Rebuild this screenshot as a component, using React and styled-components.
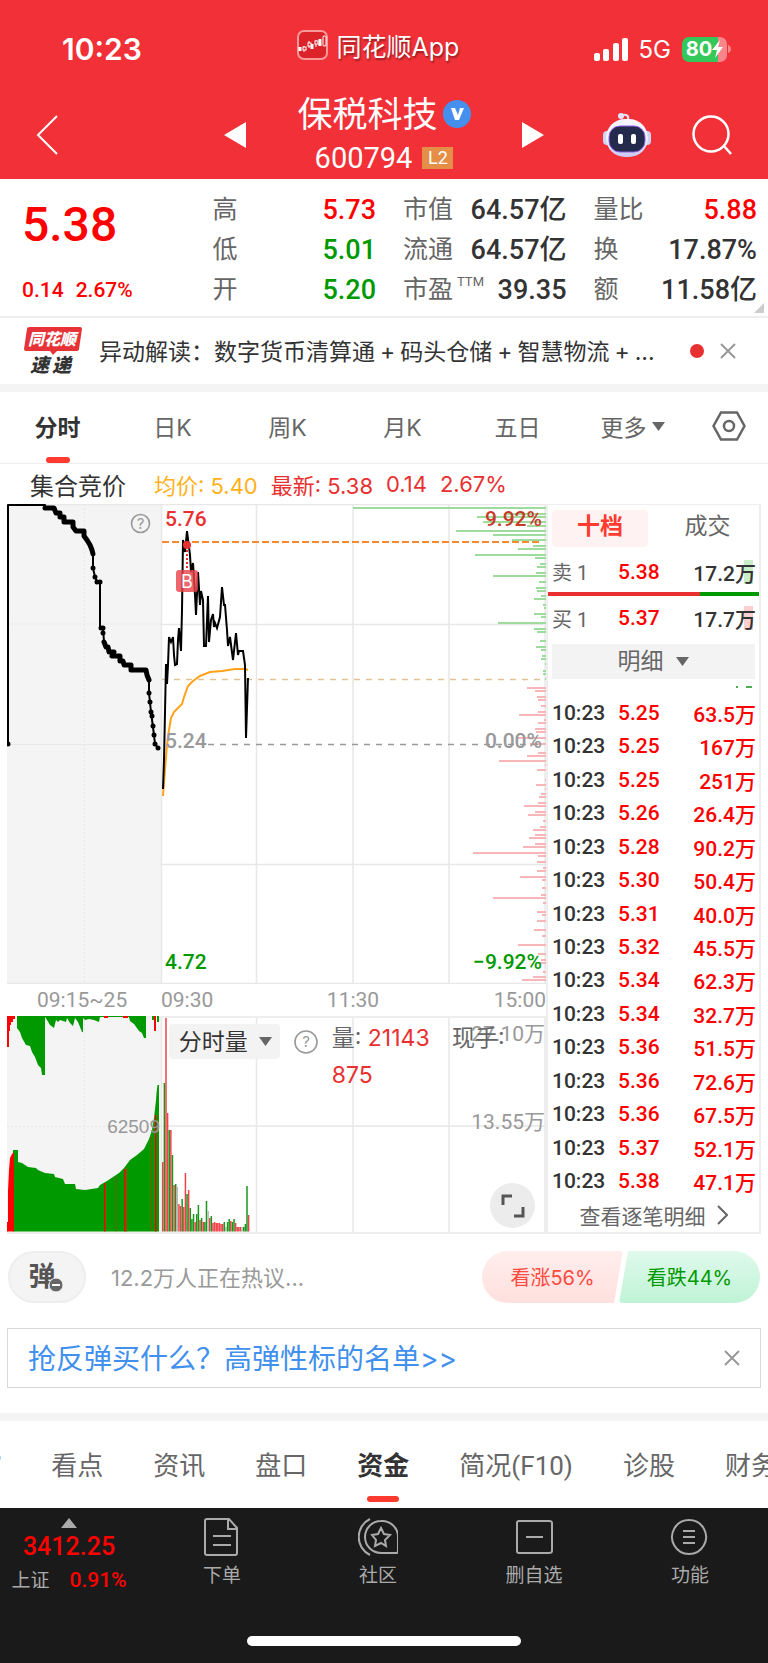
import React from "react";
import styled, { createGlobalStyle, css } from "styled-components";

const numberFont = `Roboto, "Noto Sans CJK SC", sans-serif`;
const textFont = `Inter, "Noto Sans CJK SC", sans-serif`;

const GlobalStyle = createGlobalStyle`
  * {
    box-sizing: border-box;
  }

  body {
    margin: 0;
    background: #fff;
    color: #333;
    font-family: ${textFont};
  }

  button, select {
    margin: 0;
    padding: 0;
    border: 0;
    background: none;
    color: inherit;
    font: inherit;
    cursor: pointer;
  }

  a {
    color: inherit;
    text-decoration: none;
  }

  svg {
    display: block;
    flex-shrink: 0;
  }
`;

const RED = "#f00";
const SOFT_RED = "#e93030";
const GREEN = "#090";

/* ---------- header ---------- */

const Header = styled.header`
  background: #f23038;
  color: #fff;
  height: 179px;
  display: flex;
  flex-direction: column;
`;

const StatusBar = styled.div`
  display: grid;
  grid-template-columns: 1fr auto 1fr;
  align-items: center;
  height: 90px;
  padding: 0 37px 0 25px;
`;

const Clock = styled.time`
  font-size: 30px;
  font-weight: 600;
  padding: 8px 0 0 37px;
`;

const AppMark = styled.div`
  display: flex;
  align-items: center;
  gap: 9px;
  font-size: 25px;
  text-shadow: 1px 2px 2px rgba(0, 0, 0, 0.4);
`;

const Signals = styled.div`
  display: flex;
  justify-content: flex-end;
  align-items: center;
  gap: 11px;
  font-size: 24px;
  padding-top: 8px;
`;

const BatteryBox = styled.div`
  display: flex;
  align-items: center;
  gap: 1px;
`;

const Battery = styled.div`
  display: flex;
  align-items: center;
  justify-content: center;
  width: 45px;
  height: 25px;
  border-radius: 7px;
  background: linear-gradient(to right, #34c759 80%, #f7868a 80%);
  font-size: 20px;
  font-weight: 700;
`;

const NavBar = styled.nav`
  flex: 1;
  display: grid;
  grid-template-columns: 1fr auto 1fr;
  align-items: center;
  padding: 0 36px;
`;

const NavSide = styled.div`
  display: flex;
  align-items: center;
  justify-content: space-between;
`;

const NavActions = styled.div`
  display: flex;
  align-items: center;
  gap: 40px;
`;

const StockTitle = styled.div`
  display: flex;
  flex-direction: column;
  align-items: center;
  gap: 4px;
  width: 276px;
`;

const StockName = styled.h1`
  display: flex;
  align-items: center;
  gap: 5px;
  margin: 0;
  font-size: 35px;
  line-height: 42px;
  font-weight: 400;
`;

const StockCode = styled.div`
  display: flex;
  align-items: center;
  gap: 10px;
  font-size: 29px;
  line-height: 38px;
  font-family: Roboto, sans-serif;
`;

const LevelTag = styled.span`
  width: 31px;
  height: 22px;
  background: #e58e47;
  font-size: 18px;
  line-height: 22px;
  text-align: center;
`;

/* ---------- quote ---------- */

const Quote = styled.section`
  position: relative;
  display: grid;
  grid-template-columns: repeat(4, minmax(0, 1fr));
  column-gap: 27px;
  padding: 11px 11px 6px 22px;
  border-bottom: 2px solid #eee;
  font-family: ${numberFont};
`;

const PriceBlock = styled.div`
  display: flex;
  flex-direction: column;
  justify-content: space-between;
  color: ${RED};
`;

const BigPrice = styled.strong`
  font-size: 48px;
  line-height: 70px;
  font-weight: 500;
`;

const Change = styled.div`
  display: flex;
  gap: 12px;
  font-size: 21px;
  line-height: 40px;
  font-weight: 500;
`;

const Stats = styled.dl`
  margin: 0;
`;

const Stat = styled.div`
  display: flex;
  justify-content: space-between;
  height: 40px;
  line-height: 40px;
  font-size: 25px;
  white-space: nowrap;

  dt {
    color: #666;
  }

  dd {
    margin: 0;
    font-size: 27px;
    font-weight: 500;
    color: ${(p) => p.$color || "#333"};
  }

  sup {
    margin-left: 4px;
    font-size: 13px;
    line-height: 13px;
    vertical-align: 12px;
  }
`;

const Corner = styled.svg`
  position: absolute;
  right: 4px;
  bottom: 3px;
`;

/* ---------- news line ---------- */

const News = styled.section`
  display: flex;
  align-items: center;
  height: 66px;
  padding: 0 32px 0 24px;
`;

const NewsLogoSvg = styled.svg`
  overflow: visible;
`;

const NewsText = styled.a`
  flex: 1;
  min-width: 0;
  margin-left: 17px;
  padding-bottom: 3px;
  font-size: 23px;
  white-space: nowrap;
  overflow: hidden;
`;

const Plus = styled.span`
  margin: 0 5px;
`;

const Dot = styled.span`
  width: 14px;
  height: 14px;
  margin-right: 16px;
  border-radius: 50%;
  background: #e93030;
`;

const Strip = styled.div`
  height: 8px;
  background: #f4f4f4;
`;

/* ---------- period tabs ---------- */

const PeriodTabs = styled.nav`
  display: grid;
  grid-template-columns: repeat(6, 115fr) 78fr;
  height: 72px;
  border-bottom: 1px solid #eee;
`;

const Tab = styled.button`
  position: relative;
  display: flex;
  align-items: center;
  justify-content: center;
  gap: 5px;
  padding-bottom: 3px;
  white-space: nowrap;
  font-size: ${(p) => p.$size || 23}px;
  color: #666;

  ${(p) =>
    p.$active &&
    css`
      color: #333;
      font-weight: 700;

      &::after {
        content: "";
        position: absolute;
        left: calc(50% - ${p.$bar / 2}px);
        bottom: ${p.$drop || 0}px;
        width: ${p.$bar}px;
        height: 6px;
        border-radius: 3px;
        background: #ff3b30;
      }
    `}
`;

const Legend = styled.div`
  display: flex;
  align-items: center;
  gap: 13px;
  height: 40px;
  padding-left: 30px;
  font-size: 22px;
  color: ${SOFT_RED};
  white-space: nowrap;
`;

const LegendTitle = styled.span`
  margin-right: 15px;
  font-size: 24px;
  color: #333;
`;

const Average = styled.span`
  color: #ffb11a;
`;

/* ---------- charts ---------- */

const Board = styled.section`
  display: grid;
  grid-template-columns: minmax(0, 539fr) minmax(0, 215fr);
  margin: 0 7px;
`;

const ChartSvg = styled.svg`
  width: 100%;
  height: auto;
`;

const ChartText = styled.text`
  font-family: ${numberFont};
  font-size: 21px;
  font-weight: ${(p) => p.$weight || 400};
`;

const Axis = styled.div`
  display: grid;
  grid-template-columns: 154fr 142fr 100fr 143fr;
  align-items: center;
  height: 32px;
  font-family: ${numberFont};
  font-size: 21px;
  color: #999;

  span:first-child {
    padding-left: 30px;
  }

  span:nth-child(3) {
    text-align: center;
  }

  span:last-child {
    text-align: right;
  }
`;

const VolumePanel = styled.div`
  position: relative;
`;

const VolumeBar = styled.div`
  position: absolute;
  top: 4px;
  left: 30%;
  right: 20px;
  display: flex;
  align-items: flex-start;
`;

const VolumeInfo = styled.div`
  flex: 1;
  margin-left: 14px;
  font-size: 23px;
  line-height: 37px;
  color: #666;

  span {
    color: ${SOFT_RED};
  }

  span:first-of-type {
    margin-right: 16px;
  }
`;

const HelpIcon = styled.svg`
  margin: 10px 0 0 14px;
`;

const SelectBox = styled.label`
  position: relative;
  display: block;
  border-radius: ${(p) => p.$radius || 0}px;
  background: #f3f3f3;
  color: ${(p) => p.$color};

  svg {
    position: absolute;
    top: 13px;
    left: ${(p) => p.$arrow};
    pointer-events: none;
  }
`;

const Select = styled.select`
  appearance: none;
  width: 100%;
  height: 35px;
  padding: ${(p) => p.$pad};
  font-size: 23px;
  text-align-last: ${(p) => p.$align || "left"};
`;

const VolumeSelect = styled(SelectBox)`
  width: 111px;
  margin-top: 4px;
`;

const Expand = styled.button`
  position: absolute;
  right: 11px;
  bottom: 6px;
  display: grid;
  place-items: center;
  width: 45px;
  height: 45px;
  border-radius: 50%;
  background: #ececec;
`;

/* ---------- order book ---------- */

const Book = styled.aside`
  display: flex;
  flex-direction: column;
  border: 1px solid #eee;
  border-width: 1px 2px 2px;
  font-family: ${numberFont};
`;

const BookTabs = styled.div`
  display: grid;
  grid-template-columns: 96px 1fr;
  column-gap: 8px;
  align-items: center;
  height: 46px;
  padding-left: 4px;
`;

const BookTab = styled.button`
  height: 37px;
  padding-bottom: 2px;
  border-radius: 4px;
  font-size: 23px;
  line-height: 34px;
  color: #666;

  ${(p) =>
    p.$active &&
    css`
      background: #fff2f2;
      color: #ff3b30;
      font-weight: 700;
    `}
`;

const OrderRow = styled.div`
  display: grid;
  grid-template-columns: 66px 1fr auto;
  align-items: center;
  height: ${(p) => p.$height}px;
  padding: 0 3px 0 4px;
  font-size: 21px;
  font-weight: 500;
`;

const Side = styled.span`
  font-size: 20px;
  font-weight: 400;
  color: #666;
`;

const Price = styled.span`
  color: ${RED};
`;

const Amount = styled.span`
  background: linear-gradient(${(p) => p.$tint}, ${(p) => p.$tint}) right 3px center / 9px 24px no-repeat;
`;

const Balance = styled.div`
  height: 4px;
  background: linear-gradient(to right, #e93030 72%, ${GREEN} 72%);
`;

const DetailSelect = styled(SelectBox)`
  margin: 4px 4px 0;
`;

const Ticks = styled.svg`
  align-self: flex-end;
  margin: 7px 7px 8px 0;
`;

const Trades = styled.table`
  flex: 1;
  display: flex;
  flex-direction: column;
  padding: 0 3px 0 4px;
  font-size: 21px;
  font-weight: 500;

  tbody {
    flex: 1;
    display: grid;
    grid-auto-rows: 1fr;
  }

  tr {
    display: grid;
    grid-template-columns: 66px 1fr auto;
    align-items: center;
  }

  td {
    padding: 0;
    color: ${RED};
  }

  td:first-child {
    color: #333;
  }
`;

const MoreTrades = styled.a`
  display: flex;
  align-items: center;
  justify-content: center;
  gap: 11px;
  height: 34px;
  font-size: 21px;
  color: #666;
`;

/* ---------- discussion and banner ---------- */

const Talk = styled.section`
  display: flex;
  align-items: center;
  height: 86px;
  padding: 0 8px;
`;

const BulletButton = styled.button`
  position: relative;
  width: 78px;
  height: 52px;
  padding-right: 10px;
  border: 2px solid #eee;
  border-radius: 26px;
  background: #f4f4f4;
  font-size: 27px;
  line-height: 40px;
  font-weight: 700;
  color: #555;

  svg {
    position: absolute;
    left: 38px;
    top: 24px;
  }
`;

const TalkText = styled.a`
  flex: 1;
  margin-left: 25px;
  padding-bottom: 2px;
  color: #999;
  font-size: 22px;
`;

const Vote = styled.button`
  width: 141px;
  height: 52px;
  padding-bottom: 2px;
  font-size: 20px;

  ${(p) =>
    p.$up
      ? css`
          border-radius: 26px 4px 4px 26px;
          background: linear-gradient(#ffeeed, #ffe0de);
          color: #ff4a40;
          clip-path: polygon(0 0, 100% 0, calc(100% - 9px) 100%, 0 100%);
        `
      : css`
          margin-left: -4px;
          border-radius: 4px 26px 26px 4px;
          background: linear-gradient(#e0faec, #bff3d5);
          color: ${GREEN};
          clip-path: polygon(9px 0, 100% 0, 100% 100%, 0 100%);
        `}
`;

const Banner = styled.section`
  display: flex;
  align-items: center;
  justify-content: space-between;
  height: 60px;
  margin: 8px 7px 25px;
  padding: 0 20px;
  border: 1px solid #d8d8d8;

  a {
    padding-bottom: 2px;
    font-size: 28px;
    color: #4190ee;
  }
`;

const InfoTabs = styled.nav`
  display: flex;
  gap: 50px;
  height: 87px;
  overflow: hidden;

  ${Tab} {
    flex-shrink: 0;
    font-family: ${numberFont};
  }

  /* the strip is scrolled, so its first entry is nearly out of view */
  ${Tab}:first-child {
    margin-left: -11px;
  }
`;

/* ---------- bottom bar ---------- */

const BottomBar = styled.footer`
  background: #1a1a1a;
  color: #aaa;
  height: 155px;
  display: flex;
  flex-direction: column;
  justify-content: space-between;
  align-items: center;
  padding-bottom: 17px;
`;

const BottomItems = styled.div`
  display: grid;
  grid-template-columns: 144fr repeat(4, 156fr);
  width: 100%;
  padding-top: 10px;
`;

const IndexBox = styled.a`
  display: flex;
  flex-direction: column;
  align-items: center;
  padding-right: 6px;
  font-family: ${numberFont};
  font-size: 19px;
  line-height: 28px;

  strong {
    font-size: 25px;
    line-height: 38px;
    font-weight: 500;
    color: ${RED};
  }

  em {
    margin-left: 20px;
    font-size: 21px;
    font-style: normal;
    font-weight: 500;
    color: ${RED};
  }
`;

const BottomItem = styled.button`
  display: flex;
  flex-direction: column;
  align-items: center;
  gap: 7px;
  font-size: 19px;
  line-height: 26px;
`;

const HomeIndicator = styled.div`
  width: 274px;
  height: 10px;
  border-radius: 5px;
  background: #fff;
`;

/* ---------- data ---------- */

const stats = [
  [
    ["高", "5.73", RED],
    ["低", "5.01", GREEN],
    ["开", "5.20", GREEN],
  ],
  [
    ["市值", "64.57亿"],
    ["流通", "64.57亿"],
    ["市盈", "39.35", null, "TTM"],
  ],
  [
    ["量比", "5.88", RED],
    ["换", "17.87%"],
    ["额", "11.58亿"],
  ],
];

const trades = [
  ["5.25", "63.5万"],
  ["5.25", "167万"],
  ["5.25", "251万"],
  ["5.26", "26.4万"],
  ["5.28", "90.2万"],
  ["5.30", "50.4万"],
  ["5.31", "40.0万"],
  ["5.32", "45.5万"],
  ["5.34", "62.3万"],
  ["5.34", "32.7万"],
  ["5.36", "51.5万"],
  ["5.36", "72.6万"],
  ["5.36", "67.5万"],
  ["5.37", "52.1万"],
  ["5.38", "47.1万"],
];

const auctionSteps =
  "45,508 54,508 56,513 60,513 60,517 64,517 64,522 73,522 73,527 76,531 84,531 84,536 87,540 90,545 92,550 93,554";
const auctionTail =
  "104,642 106,647 108,647 109,652 114,652 112,656 120,656 120,661 123,661 124,665 131,665 131,670 146,670 147,675 149,680";
const auctionDots = [
  [8, 744], [93, 568], [95, 577], [97, 582], [100, 582], [101, 628], [103, 628], [103, 633],
  [149, 693], [150, 702], [151, 712], [152, 716], [153, 726], [154, 735], [155, 744], [158, 748],
];
const auctionLine = `8,744 8,505 45,505 ${auctionSteps} 93,568 95,577 97,582 100,582 100,628 103,628 ${auctionTail} 149,693 151,712 154,735 155,744 158,748`;

const priceLine =
  "163,789 164,760 166,664 167,684 168,665 169,637 171,642 173,637 174,655 175,665 177,664 178,640 179,628 181,651 182,610 183,540 185,552 187,531 190,555 191,572 193,563 195,595 196,615 198,572 200,605 201,591 203,600 204,646 206,646 208,596 209,642 211,620 213,614 214,627 215,623 217,628 220,617 222,587 224,605 225,605 227,630 228,646 230,637 233,660 236,633 238,655 239,651 243,651 245,665 246,738 248,678";
const averageLine =
  "163,796 165,770 167,745 169,730 171,718 174,712 178,708 182,704 184,697 188,686 193,681 200,676 210,672 222,671 235,669 245,669 248,670";

// [left end, y] of each turnover bar, all of them end at the right edge
const bidBars = [
  [353, 508], [506, 514], [477, 517], [483, 522], [527, 526], [456, 531], [493, 535], [512, 540],
  [533, 546], [518, 549], [475, 555], [535, 558], [540, 564], [537, 567], [536, 573], [493, 576],
  [539, 582], [536, 588], [537, 591], [541, 596], [534, 599], [543, 605], [544, 608], [534, 614],
  [541, 617], [498, 623], [534, 629], [537, 632], [540, 641], [536, 647], [541, 650], [542, 656],
  [541, 659], [545, 664], [543, 671], [543, 674], [545, 679],
];
const askBars = [
  [527, 688], [535, 691], [537, 697], [538, 700], [541, 706], [538, 712], [519, 715], [544, 720],
  [538, 723], [535, 729], [536, 732], [517, 738], [530, 744], [538, 753], [527, 756], [499, 761],
  [545, 765], [537, 770], [545, 780], [536, 785], [545, 789], [541, 794], [539, 797], [538, 803],
  [524, 806], [535, 812], [528, 815], [543, 821], [540, 827], [533, 830], [535, 835], [529, 838],
  [535, 844], [523, 847], [473, 853], [538, 856], [537, 862], [543, 868], [537, 871], [520, 877],
  [542, 880], [542, 888], [541, 895], [493, 898], [543, 903], [537, 912], [542, 915], [537, 921],
  [534, 930], [542, 936], [518, 945], [538, 954], [541, 960], [538, 963], [543, 972], [533, 977],
  [522, 980],
];

const R = "#ee4348";
const G = "#1a961a";
const N = "#b8b8b8";
const volumes = [
  [R, 1162], [G, 1083], [R, 1018], [R, 1113], [G, 1130], [R, 1130], [G, 1155], [R, 1185], [G, 1184],
  [N, 1187], [R, 1204], [R, 1206], [G, 1199], [R, 1207], [R, 1173], [G, 1194], [R, 1190], [G, 1208],
  [G, 1219], [G, 1214], [R, 1222], [G, 1214], [G, 1205], [R, 1220], [G, 1218], [R, 1222], [G, 1222],
  [G, 1201], [N, 1211], [R, 1218], [G, 1216], [R, 1223], [R, 1222], [R, 1223], [R, 1223], [R, 1223],
  [R, 1224], [R, 1224], [G, 1222], [N, 1227], [G, 1222], [G, 1219], [R, 1221], [G, 1222], [G, 1219],
  [R, 1223], [R, 1227], [R, 1227], [R, 1227], [N, 1227], [G, 1227], [G, 1224], [G, 1186], [R, 1215],
];

/* ---------- small drawings ---------- */

const Caret = ({ size = 13 }) => (
  <svg width={size} height="9" viewBox="0 0 12 9" preserveAspectRatio="none" aria-hidden="true">
    <path d="M0 0h12L6 9z" fill="#666" />
  </svg>
);

const Cross = ({ size = 16 }) => (
  <svg width={size} height={size} viewBox="0 0 16 16" stroke="#999" strokeWidth="2">
    <path d="M1 1l14 14M15 1L1 15" />
  </svg>
);

const AppLogo = () => (
  <svg width="31" height="30" viewBox="0 0 31 30">
    <rect x="1" y="1" width="29" height="28" rx="6" fill="#dc2329" stroke="#f7989b" strokeWidth="2" />
    <g fill="#fff" stroke="#fff" strokeWidth="1">
      <path d="M3 17v4M15 14v5M23 9v7" strokeWidth="3" />
      <path d="M7 16v6M12 11v7M19 10v7" />
      <rect x="6" y="17" width="3" height="3" fill="#dc2329" />
      <rect x="11" y="13" width="3" height="3" fill="#dc2329" />
      <rect x="18" y="11" width="3" height="3" fill="#dc2329" />
      <rect x="26" y="6" width="3" height="10" rx="1" fill="#dc2329" />
    </g>
  </svg>
);

const Robot = () => (
  <svg width="50" height="46" viewBox="0 0 50 46">
    <defs>
      <linearGradient id="shell" x1="0" y1="0" x2="0" y2="1">
        <stop offset="0.5" stopColor="#f4f4ff" />
        <stop offset="1" stopColor="#c9c8f2" />
      </linearGradient>
    </defs>
    <path d="M26 8c1-4-1-6-6-5" fill="none" stroke="#e4e1fa" strokeWidth="2" />
    <circle cx="19" cy="4" r="3" fill="#e2e4fa" />
    <rect x="1" y="19" width="9" height="14" rx="4" fill="#cfd3f5" />
    <rect x="40" y="19" width="9" height="14" rx="4" fill="#cfd3f5" />
    <rect x="4" y="7" width="42" height="38" rx="19" fill="url(#shell)" />
    <rect x="7" y="14" width="36" height="26" rx="11" fill="#232a4c" stroke="#8f62e6" strokeWidth="1" />
    <rect x="16" y="22" width="5" height="10" rx="2" fill="#fff" />
    <rect x="29" y="22" width="5" height="10" rx="2" fill="#fff" />
  </svg>
);

const NewsLogo = () => (
  <NewsLogoSvg width="58" height="48" viewBox="0 0 58 48">
    <path d="M6 0h50q2 0 2 2l-3 20q0 2-3 2H33l-4 4-3-4H2q-2 0-2-2L3 2q0-2 3-2z" fill="#e73338" />
    <g fontFamily="Noto Sans CJK SC" fontWeight="900" fontStyle="italic">
      <text x="4" y="18" fontSize="16" fill="#fff">同花顺</text>
      <text x="6" y="45" fontSize="19" fill="#333">速</text>
      <text x="28" y="45" fontSize="19" fill="#333">递</text>
    </g>
  </NewsLogoSvg>
);

const Help = ({ x, y, r }) => (
  <g>
    <circle cx={x} cy={y} r={r} fill="none" stroke="#999" strokeWidth="1.6" />
    <text x={x} y={y + 5} fontSize="15" fontFamily="Inter" fill="#999" textAnchor="middle">?</text>
  </g>
);

const PriceChart = () => (
  <ChartSvg viewBox="7 504 539 480">
    <rect x="7" y="504" width="154" height="480" fill="#f4f4f4" />
    <path d="M7 624h154M84.5 504v480" stroke="#e6e6e6" strokeDasharray="2 2" />
    <path d="M7 744.5h154" stroke="#e8e8e8" />
    <path
      d="M7 504.5h539M161 624.5h385M161 864.5h385M7 983.5h539M161.500 504v480M256.500 504v480M353 504v480M449 504v480M545 504v480"
      stroke="#e8e8e8"
      strokeWidth="1.5"
    />
    <g stroke="#9edc9e" strokeWidth="2">
      {bidBars.map(([x, y]) => (
        <path key={y} d={`M${x} ${y}H546`} />
      ))}
    </g>
    <g stroke="#f8b6b9" strokeWidth="2">
      {askBars.map(([x, y]) => (
        <path key={y} d={`M${x} ${y}H546`} />
      ))}
    </g>
    <path d="M162 542h380" stroke="#fa8a32" strokeWidth="2" strokeDasharray="7 3" />
    <path d="M162 679.5h382" stroke="#e3c295" strokeDasharray="6 6" strokeWidth="1.5" />
    <path d="M208 744.500h336" stroke="#999" strokeDasharray="6 6" strokeWidth="1.5" />
    <g fill="none" stroke="#000" strokeLinejoin="round" strokeLinecap="round">
      <polyline points={auctionLine} strokeWidth="2" />
      <polyline points={auctionSteps} strokeWidth="5" />
      <polyline points={auctionTail} strokeWidth="5" />
    </g>
    {auctionDots.map(([x, y]) => (
      <circle key={`${x}-${y}`} cx={x} cy={y} r="2.5" />
    ))}
    <polyline points={averageLine} fill="none" stroke="#ffa21a" strokeWidth="2" />
    <polyline points={priceLine} fill="none" stroke="#000" strokeWidth="2" />
    <circle cx="187" cy="545" r="4" fill="#e93030" />
    <path d="M187 550v20" stroke="#e93030" strokeWidth="2" strokeDasharray="2 2" />
    <rect x="176" y="570" width="22" height="22" rx="3" fill="#ea4147" fillOpacity="0.8" />
    <text x="187" y="588" fontSize="18" fontFamily="Inter" fill="#fff" textAnchor="middle">B</text>
    <Help x={140.5} y={523.5} r={9} />
    <ChartText x="165" y="526" fill={SOFT_RED} $weight={500}>5.76</ChartText>
    <ChartText x="542" y="526" fill="#c83a28" textAnchor="end" $weight={500}>9.92%</ChartText>
    <ChartText x="165" y="748" fill="#999" $weight={500}>5.24</ChartText>
    <ChartText x="542" y="748" fill="#999" textAnchor="end" $weight={500}>0.00%</ChartText>
    <ChartText x="165" y="969" fill={GREEN} $weight={500}>4.72</ChartText>
    <ChartText x="542" y="969" fill={GREEN} textAnchor="end" $weight={500}>−9.92%</ChartText>
  </ChartSvg>
);

const VolumeChart = () => (
  <ChartSvg viewBox="7 1016 539 218">
    <rect x="7" y="1016" width="154" height="218" fill="#f4f4f4" />
    <path d="M7 1126.500h154M84.500 1016v218" stroke="#e6e6e6" strokeDasharray="2 2" />
    <path d="M161 1126h385M161.500 1016v218M256.500 1016v218M353 1016v218M449 1016v218M545 1016v218" stroke="#e8e8e8" strokeWidth="1.5" />
    <path d="M7 1017h539M7 1233h539" stroke="#eee" strokeWidth="2" />
    <path
      d="M17 1016V1028l3 4 2 6 4 7 4 1 2 6 3 5 3 8 3 3 1 7h3V1017l2 3 3 5 4 3 2-8 2 2 2-2 6 2 1-4 3 5 3 3 2-8 3 4 4 10h1v-14l2 2 4-1 5 1 5 2 1-5h29l1 4 4 3 5 7 3 2 2 5h2v-22zM157 1016v6h2v-6zM152 1016v4h3v-4z"
      fill={GREEN}
    />
    <path d="M7 1016v31h2v-16h1v-6h1v-3h2v-3h2v-3zM154 1016v15h2v-15zM104 1016h4v2h-4zM123 1016h5v2h-5z" fill="#f00" />
    <path
      d="M13 1231.500V1150h5v12l4 1 6 4 8 1 2 2 7 3 9 1 1 3 8 2 2 5h10l1 5 9 1 13-2 2-3 7-4 6-4 6-4 5-5 6-8 7-5 7-6 5-10 3-9 2-12 2-18 .5-7 1-8h1.500v146.500z"
      fill={GREEN}
    />
    <path d="M7 1231.500V1222h1v-31l1-21 1-12 2-4 2-2v79.500zM104 1183h1.500v48.500h-1.500zM124 1169h1.500v62.500h-1.500zM155 1115h1.500v116.500h-1.500z" fill="#f00" />
    <path d="M116 1176v55.500M126.500 1167v64.500M150.500 1136v95" stroke="#7c5a00" strokeWidth="1" />
    {volumes.map(([color, top], i) => (
      <rect key={i} x={162 + i * 1.62} y={top} width="1.5" height={1231.5 - top} fill={color} />
    ))}
    <text x="160" y="1133" fontSize="19" fontFamily="Liberation Sans" fill="#999" textAnchor="end">62509</text>
    <ChartText x="545" y="1041" fill="#999" textAnchor="end">27.10万</ChartText>
    <ChartText x="545" y="1129" fill="#999" textAnchor="end">13.55万</ChartText>
  </ChartSvg>
);

const bottomItems = [
  [
    "下单",
    <path d="M5 1h22l8 9v25q0 2-2 2H5q-2 0-2-2V3q0-2 2-2zM26 1v10h9M11 18h18M11 27h18" />,
  ],
  [
    "社区",
    <path d="M23 3a16 16 0 0 0 0 32h15q2 0 2-2V19A16 16 0 0 0 23 3zM12 1a20 20 0 0 0 0 36M23 10l3 6 6 1-5 5 1 6-5-3-6 3 1-6-4-5 6-1z" />,
  ],
  ["删自选", <path d="M5 3h30q3 0 3 2v28q0 2-3 2H5q-2 0-2-2V5q0-2 2-2zM12 19h17" />],
  ["功能", <path d="M19 2a17 17 0 1 0 0.1 0zM13 13h12M13 19h12M13 25h12" />],
];

const App = () => {
  return (
    <>
      <GlobalStyle />
      <Header>
        <StatusBar>
          <Clock>10:23</Clock>
          <AppMark>
            <AppLogo />
            同花顺App
          </AppMark>
          <Signals>
            <svg width="34" height="23" viewBox="0 0 34 23" fill="#fff">
              <rect x="0" y="15" width="6" height="8" rx="2" />
              <rect x="9" y="11" width="6" height="12" rx="2" />
              <rect x="19" y="5" width="6" height="18" rx="2" />
              <rect x="28" y="0" width="6" height="23" rx="2" />
            </svg>
            5G
            <BatteryBox>
              <Battery>
                80
                <svg width="11" height="18" viewBox="0 0 11 18" fill="#fff">
                  <path d="M8 0L0 10h5l-2 8 8-11H6z" />
                </svg>
              </Battery>
              <svg width="3" height="8" viewBox="0 0 3 8">
                <path d="M0 0q3 1 3 4t-3 4z" fill="#f7868a" />
              </svg>
            </BatteryBox>
          </Signals>
        </StatusBar>
        <NavBar>
          <NavSide>
            <button aria-label="返回">
              <svg width="22" height="40" viewBox="0 0 22 40" fill="none" stroke="#fff" strokeWidth="2">
                <path d="M21 1L2 20l19 19" />
              </svg>
            </button>
            <button aria-label="上一只">
              <svg width="22" height="26" viewBox="0 0 22 26" fill="#fff">
                <path d="M22 0v26L0 13z" />
              </svg>
            </button>
          </NavSide>
          <StockTitle>
            <StockName>
              保税科技
              <svg width="28" height="28" viewBox="0 0 28 28">
                <circle cx="14" cy="14" r="14" fill="#4590ee" />
                <path d="M8 8h4l3 7 2-7h4l-5 12h-4z" fill="#fff" />
              </svg>
            </StockName>
            <StockCode>
              600794
              <LevelTag>L2</LevelTag>
            </StockCode>
          </StockTitle>
          <NavSide>
            <button aria-label="下一只">
              <svg width="22" height="26" viewBox="0 0 22 26" fill="#fff">
                <path d="M0 0v26l22-13z" />
              </svg>
            </button>
            <NavActions>
              <button aria-label="问财">
                <Robot />
              </button>
              <button aria-label="搜索">
                <svg width="40" height="40" viewBox="0 0 40 40" fill="none" stroke="#fff" strokeWidth="2.500">
                  <circle cx="19" cy="19" r="17.500" />
                  <path d="M32 31l7 8" />
                </svg>
              </button>
            </NavActions>
          </NavSide>
        </NavBar>
      </Header>

      <Quote>
        <PriceBlock>
          <BigPrice>5.38</BigPrice>
          <Change>
            <span>0.14</span>
            <span>2.67%</span>
          </Change>
        </PriceBlock>
        {stats.map((column, i) => (
          <Stats key={i}>
            {column.map(([label, value, color, note]) => (
              <Stat key={label} $color={color}>
                <dt>
                  {label}
                  {note && <sup>{note}</sup>}
                </dt>
                <dd>{value}</dd>
              </Stat>
            ))}
          </Stats>
        ))}
        <Corner width="10" height="10" viewBox="0 0 10 10">
          <path d="M10 0v10H0z" fill="#ccc" />
        </Corner>
      </Quote>

      <News>
        <NewsLogo />
        <NewsText href="#news">
          异动解读：数字货币清算通<Plus>+</Plus>码头仓储<Plus>+</Plus>智慧物流<Plus>+</Plus>...
        </NewsText>
        <Dot />
        <button aria-label="关闭">
          <Cross />
        </button>
      </News>
      <Strip />

      <PeriodTabs>
        <Tab $active $bar={24}>分时</Tab>
        <Tab>日K</Tab>
        <Tab>周K</Tab>
        <Tab>月K</Tab>
        <Tab>五日</Tab>
        <Tab>
          更多
          <Caret />
        </Tab>
        <Tab aria-label="设置">
          <svg width="34" height="30" viewBox="0 0 34 30" fill="none" stroke="#666" strokeWidth="2.500">
            <path d="M9 1.500h16L32.500 15 25 28.500H9L1.500 15z" />
            <circle cx="17" cy="15" r="5" />
          </svg>
        </Tab>
      </PeriodTabs>

      <Legend>
        <LegendTitle>集合竞价</LegendTitle>
        <Average>均价: 5.40</Average>
        <span>最新: 5.38</span>
        <span>0.14</span>
        <span>2.67%</span>
      </Legend>

      <Board>
        <div>
          <PriceChart />
          <Axis>
            <span>09:15~25</span>
            <span>09:30</span>
            <span>11:30</span>
            <span>15:00</span>
          </Axis>
          <VolumePanel>
            <VolumeChart />
            <VolumeBar>
              <VolumeSelect $radius={4} $arrow="90px" $color="#333">
                <Select aria-label="指标" $pad="0 0 0 10px">
                  <option>分时量</option>
                </Select>
                <Caret />
              </VolumeSelect>
              <HelpIcon width="24" height="24" viewBox="0 0 24 24">
                <Help x={12} y={12} r={11} />
              </HelpIcon>
              <VolumeInfo>
                量: <span>21143</span> 现手: <span>875</span>
              </VolumeInfo>
            </VolumeBar>
            <Expand aria-label="全屏">
              <svg width="24" height="24" viewBox="0 0 24 24" fill="none" stroke="#555" strokeWidth="3">
                <path d="M2 11V2h9M22 13v9h-9" />
              </svg>
            </Expand>
          </VolumePanel>
        </div>

        <Book>
          <BookTabs>
            <BookTab $active>十档</BookTab>
            <BookTab>成交</BookTab>
          </BookTabs>
          <OrderRow $height={41}>
            <Side>卖 1</Side>
            <Price>5.38</Price>
            <Amount $tint="#c9ecc9">17.2万</Amount>
          </OrderRow>
          <Balance />
          <OrderRow $height={44}>
            <Side>买 1</Side>
            <Price>5.37</Price>
            <Amount $tint="#fbcfd0">17.7万</Amount>
          </OrderRow>
          <DetailSelect $arrow="calc(50% + 22px)" $color="#666">
            <Select aria-label="明细" $pad="0 26px 0 0" $align="center">
              <option>明细</option>
            </Select>
            <Caret />
          </DetailSelect>
          <Ticks width="16" height="2" viewBox="0 0 16 2" fill="#4caf50">
            <path d="M0 0h2v2H0zM10 0h6v2h-6z" />
          </Ticks>
          <Trades>
            <tbody>
              {trades.map(([price, amount], i) => (
                <tr key={i}>
                  <td>10:23</td>
                  <td>{price}</td>
                  <td>{amount}</td>
                </tr>
              ))}
            </tbody>
          </Trades>
          <MoreTrades href="#trades">
            查看逐笔明细
            <svg width="11" height="20" viewBox="0 0 11 20" fill="none" stroke="#666" strokeWidth="2">
              <path d="M1 1l9 9-9 9" />
            </svg>
          </MoreTrades>
        </Book>
      </Board>

      <Talk>
        <BulletButton>
          弹
          <svg width="16" height="16" viewBox="0 0 16 16">
            <circle cx="8" cy="8" r="7" fill="#666" stroke="#f4f4f4" strokeWidth="1" />
            <path d="M4 8h8" stroke="#fff" strokeWidth="2" />
          </svg>
        </BulletButton>
        <TalkText href="#talk">12.2万人正在热议...</TalkText>
        <Vote $up>看涨56%</Vote>
        <Vote>看跌44%</Vote>
      </Talk>

      <Banner>
        <a href="#list">抢反弹买什么？高弹性标的名单&gt;&gt;</a>
        <button aria-label="关闭">
          <Cross />
        </button>
      </Banner>
      <Strip />

      <InfoTabs>
        <Tab $size={26}>?</Tab>
        <Tab $size={26}>看点</Tab>
        <Tab $size={26}>资讯</Tab>
        <Tab $size={26}>盘口</Tab>
        <Tab $size={26} $active $bar={32} $drop={6}>资金</Tab>
        <Tab $size={26}>简况(F10)</Tab>
        <Tab $size={26}>诊股</Tab>
        <Tab $size={26}>财务</Tab>
      </InfoTabs>

      <BottomBar>
        <BottomItems>
          <IndexBox href="#index">
            <svg width="16" height="10" viewBox="0 0 16 10">
              <path d="M8 0l8 10H0z" fill="#aaa" />
            </svg>
            <strong>3412.25</strong>
            <span>
              上证<em>0.91%</em>
            </span>
          </IndexBox>
          {bottomItems.map(([label, icon]) => (
            <BottomItem key={label}>
              <svg width="40" height="38" viewBox="0 0 40 38" fill="none" stroke="#aaa" strokeWidth="2">
                {icon}
              </svg>
              {label}
            </BottomItem>
          ))}
        </BottomItems>
        <HomeIndicator />
      </BottomBar>
    </>
  );
};

export default App;
